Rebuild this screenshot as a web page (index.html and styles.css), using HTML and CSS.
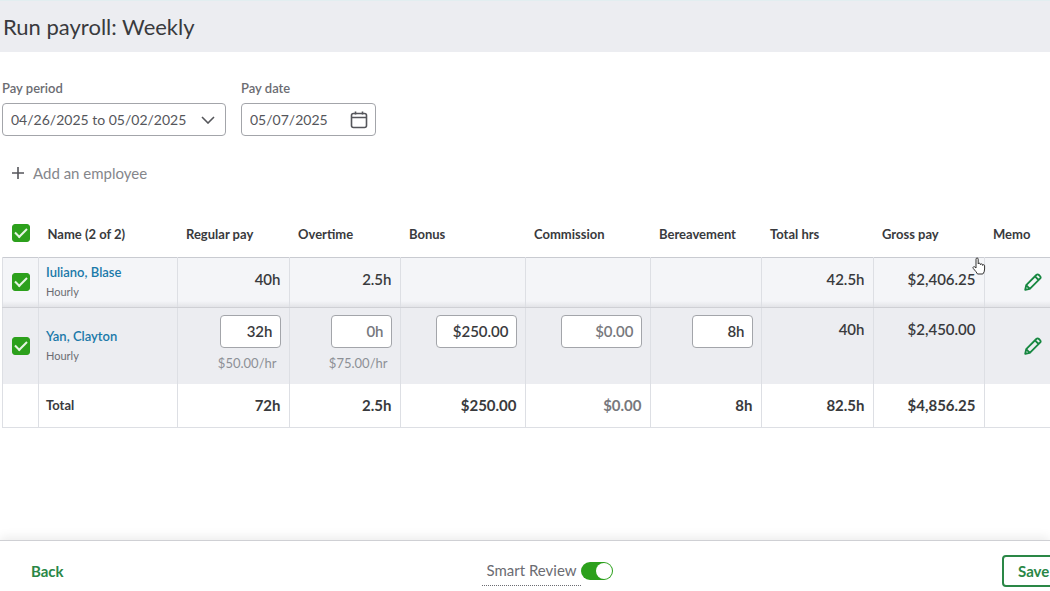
FILE: index.html
```html
<!DOCTYPE html>
<html lang="en">
<head>
    <meta charset="UTF-8">
    <title>Run payroll: Weekly</title>
    <link rel="stylesheet" href="styles.css">
</head>
<body>

    <header class="page-header">
        <h1>Run payroll: Weekly</h1>
    </header>

    <main class="content">
        <form class="filters">
            <div class="field">
                <label for="pay-period">Pay period</label>
                <div class="control period">
                    <select id="pay-period">
                        <option>04/26/2025 to 05/02/2025</option>
                    </select>
                    <svg class="chevron" viewBox="0 0 14 8" aria-hidden="true"><path d="M1 1l6 6 6-6"/></svg>
                </div>
            </div>
            <div class="field">
                <label for="pay-date">Pay date</label>
                <div class="control date">
                    <input type="text" id="pay-date" value="05/07/2025">
                    <button type="button" class="calendar" aria-label="Open calendar">
                        <svg viewBox="0 0 18 18"><rect x="1.500" y="2.500" width="15" height="14" rx="2"/><path d="M1.500 6.500h15M5.500 0.500v3M12.500 0.500v3"/></svg>
                    </button>
                </div>
            </div>
        </form>

        <button type="button" class="add-employee">
            <svg viewBox="0 0 12 12" aria-hidden="true"><path d="M6 0v12M0 6h12"/></svg>
            Add an employee
        </button>

        <table class="payroll">
            <colgroup>
                <col class="col-check">
                <col class="col-name">
                <col class="col-total">
                <col class="col-hours">
                <col class="col-money">
                <col class="col-money">
                <col class="col-hours">
                <col class="col-total">
                <col class="col-hours">
                <col class="col-memo">
            </colgroup>
            <thead>
                <tr>
                    <th class="check"><input type="checkbox" class="tick" aria-label="Select all" checked></th>
                    <th>Name (2 of 2)</th>
                    <th>Regular pay</th>
                    <th>Overtime</th>
                    <th>Bonus</th>
                    <th>Commission</th>
                    <th>Bereavement</th>
                    <th>Total hrs</th>
                    <th>Gross pay</th>
                    <th>Memo</th>
                </tr>
            </thead>
            <tbody>
                <tr class="row-plain">
                    <td class="check"><input type="checkbox" class="tick" aria-label="Select Iuliano, Blase" checked></td>
                    <td class="name"><a href="#">Iuliano, Blase</a><small>Hourly</small></td>
                    <td>40h</td>
                    <td>2.5h</td>
                    <td></td>
                    <td></td>
                    <td></td>
                    <td>42.5h</td>
                    <td>$2,406.25</td>
                    <td class="memo">
                        <button type="button" aria-label="Edit memo for Iuliano, Blase">
                            <svg viewBox="0 0 18 18"><path d="M1.200 16.800l1-4.600L12.300 2q1.300-1.300 2.600 0l1.100 1.100q1.300 1.300 0 2.600L5.800 15.800zM2.200 12.200l3.600 3.600M11 3.400l3.600 3.600"/></svg>
                        </button>
                    </td>
                </tr>
                <tr class="row-active">
                    <td class="check"><input type="checkbox" class="tick" aria-label="Select Yan, Clayton" checked></td>
                    <td class="name"><a href="#">Yan, Clayton</a><small>Hourly</small></td>
                    <td class="entry"><input type="text" class="amount" aria-label="Regular pay hours" value="32h"><small>$50.00/hr</small></td>
                    <td class="entry"><input type="text" class="amount empty" aria-label="Overtime hours" value="0h"><small>$75.00/hr</small></td>
                    <td class="entry"><input type="text" class="amount wide" aria-label="Bonus" value="$250.00"></td>
                    <td class="entry"><input type="text" class="amount wide empty" aria-label="Commission" value="$0.00"></td>
                    <td class="entry"><input type="text" class="amount" aria-label="Bereavement hours" value="8h"></td>
                    <td>40h</td>
                    <td>$2,450.00</td>
                    <td class="memo">
                        <button type="button" aria-label="Edit memo for Yan, Clayton">
                            <svg viewBox="0 0 18 18"><path d="M1.200 16.800l1-4.600L12.300 2q1.300-1.300 2.600 0l1.100 1.100q1.300 1.300 0 2.600L5.800 15.800zM2.200 12.200l3.600 3.600M11 3.400l3.600 3.600"/></svg>
                        </button>
                    </td>
                </tr>
            </tbody>
            <tfoot>
                <tr>
                    <td></td>
                    <th scope="row">Total</th>
                    <td>72h</td>
                    <td>2.5h</td>
                    <td>$250.00</td>
                    <td class="zero">$0.00</td>
                    <td>8h</td>
                    <td>82.5h</td>
                    <td>$4,856.25</td>
                    <td></td>
                </tr>
            </tfoot>
        </table>
    </main>

    <footer class="actions">
        <button type="button" class="back">Back</button>
        <div class="review">
            <label for="smart-review">Smart Review</label>
            <input type="checkbox" role="switch" id="smart-review" class="switch" checked>
        </div>
        <button type="button" class="save">Save</button>
    </footer>

    <svg class="pointer" viewBox="0 0 14 18" aria-hidden="true"><path d="M4 11V2.200q0-1.200 1.100-1.200t1.100 1.200V7q.2-.8 1.100-.8t1.100.9v.6q.2-.8 1.100-.8t1.100 1v.5q.2-.7 1-.7t1 1V12q0 3.200-1.800 5H5.500Q4.500 15 1.300 11.500q-.8-1.100.2-1.700T4 11z"/></svg>

</body>
</html>
```
FILE: styles.css
```css
* {
    margin: 0;
    padding: 0;
    box-sizing: border-box;
}

body {
    min-height: 100vh;
    display: flex;
    flex-direction: column;
    overflow-x: hidden;
    background-color: #fff;
    color: #393a3d;
    font-family: Lato, sans-serif;
    font-size: 15px;
    line-height: 20px;
}

button, input, select {
    font: inherit;
    color: inherit;
}

button {
    background: none;
    border: none;
    cursor: pointer;
}

svg {
    display: block;
    fill: none;
    stroke: currentColor;
}

.page-header {
    background-color: #ecedf1;
    border-top: 1px solid #e2eef0;
    padding: 10px 3px;
}

.page-header h1 {
    font-size: 22px;
    font-weight: normal;
    line-height: 31px;
}

.content {
    flex: 1;
    padding: 27px 0 0 2px;
}

.filters {
    display: flex;
    gap: 15px;
}

.field label {
    display: block;
    margin-bottom: 6px;
    color: #6b6c72;
    font-size: 13px;
    font-weight: 600;
    line-height: 18px;
}

.control {
    display: flex;
    align-items: center;
    height: 33px;
    border: 1px solid #a3a5aa;
    border-radius: 4px;
    color: #55565b;
    font-size: 14px;
}

.period {
    width: 224px;
    padding-right: 10px;
}

.date {
    width: 135px;
    padding-right: 7px;
}

.control select,
.control input {
    flex: 1;
    min-width: 0;
    height: 100%;
    padding-left: 8px;
    border: none;
    background: none;
    appearance: none;
}

.chevron {
    width: 14px;
    height: 8px;
    stroke-width: 1.6;
}

.calendar svg {
    width: 18px;
    height: 18px;
    stroke-width: 1.6;
}

.add-employee {
    display: flex;
    align-items: center;
    gap: 9px;
    margin: 27px 0 26px 10px;
    color: #85868b;
}

.add-employee svg {
    width: 12px;
    height: 12px;
    color: #55565b;
    stroke-width: 1.6;
}

/* payroll grid */

.payroll {
    width: 100%;
    min-width: 1048px;
    table-layout: fixed;
    border-collapse: collapse;
}

.col-check { width: 36px; }
.col-hours { width: 111px; }
.col-total { width: 112px; }
.col-money { width: 125px; }
.col-memo { width: 66px; }

.payroll th {
    padding: 0 9px;
    font-size: 13px;
    font-weight: bold;
    text-align: left;
}

.payroll thead th {
    height: 48px;
    padding-top: 2px;
}

.payroll td {
    padding: 11px 8px 0;
    border: 1px solid #dddfe4;
    font-weight: 600;
    text-align: right;
    vertical-align: top;
}

.payroll td:last-child {
    border-right: none;
}

.payroll tbody tr:first-child td {
    border-top-color: #c9cbd1;
}

.payroll .check {
    padding: 0;
    vertical-align: middle;
}

.payroll .name {
    padding: 0 7px;
    font-weight: normal;
    text-align: left;
    vertical-align: middle;
}

.name a,
.name small {
    display: block;
}

.name a {
    color: #1a79a9;
    font-size: 13px;
    font-weight: 600;
    text-decoration: none;
}

.name small {
    color: #6b6c72;
    font-size: 11px;
}

.row-plain {
    height: 50px;
    background: linear-gradient(#f4f5f8 88%, #e3e4e8);
}

.row-plain td {
    border-bottom-color: #cfd0d5;
}

.row-active {
    height: 77px;
    background-color: #ecedf1;
}

.row-active td {
    border-bottom: none;
}

.payroll .entry {
    padding-top: 7px;
}

.amount {
    display: block;
    width: 61px;
    height: 33px;
    margin-left: auto;
    padding-right: 7px;
    border: 1px solid #a3a5aa;
    border-radius: 4px;
    background-color: #fff;
    font-weight: 600;
    text-align: right;
}

.amount.wide {
    width: 81px;
}

.amount.empty,
.payroll .zero {
    color: #77787d;
}

.entry small {
    display: block;
    margin-top: 5px;
    padding-right: 4px;
    color: #8d9096;
    font-size: 13px;
    font-weight: normal;
}

.payroll .memo {
    padding: 0 8px;
    vertical-align: middle;
}

.memo button {
    display: block;
    margin-left: auto;
    color: #168740;
}

.memo svg {
    width: 18px;
    height: 18px;
    stroke-width: 1.8;
    stroke-linejoin: round;
}

.payroll tfoot tr {
    height: 43px;
}

.payroll tfoot th {
    padding: 0 7px;
    border-bottom: 1px solid #dddfe4;
}

.payroll tfoot td {
    border-top: none;
    font-weight: bold;
}

.tick {
    display: grid;
    place-content: center;
    width: 18px;
    height: 18px;
    margin: 0 auto;
    border: 1px solid #a3a5aa;
    border-radius: 3px;
    appearance: none;
}

.tick:checked {
    border-color: #2ca01c;
    background-color: #2ca01c;
}

.tick:checked::before {
    content: "";
    width: 10px;
    height: 5px;
    margin-bottom: 3px;
    border: solid #e6f5e3;
    border-width: 0 0 2px 2px;
    transform: rotate(-45deg);
}

/* bottom bar */

.actions {
    display: grid;
    grid-template-columns: 1fr auto 1fr;
    align-items: center;
    padding: 14px 0 4px 31px;
    overflow-x: clip;
    border-top: 1px solid #cfd0d4;
    background-color: #fff;
    box-shadow: 0 -3px 10px rgba(0, 0, 0, 0.08);
}

.back,
.save {
    color: #2a8746;
    font-weight: bold;
}

.back {
    justify-self: start;
}

.review {
    display: flex;
    align-items: center;
    margin-left: 14px;
}

.review label {
    padding: 4px 4px 5px;
    border-bottom: 1px dotted #6b6c72;
    color: #6b6c72;
}

.switch {
    width: 32px;
    height: 18px;
    padding: 1px;
    border-radius: 9px;
    background-color: #8d9096;
    appearance: none;
}

.switch::before {
    content: "";
    display: block;
    width: 16px;
    height: 16px;
    border-radius: 50%;
    background-color: #fff;
}

.switch:checked {
    background-color: #2ca01c;
}

.switch:checked::before {
    margin-left: auto;
}

/* runs off the right edge of the bar */
.save {
    justify-self: end;
    width: 96px;
    height: 32px;
    margin-right: -48px;
    padding-left: 14px;
    border: 2px solid #2a8746;
    border-radius: 4px;
    text-align: left;
}

.pointer {
    position: absolute;
    top: 257px;
    left: 972px;
    width: 14px;
    height: 18px;
    fill: #fff;
    stroke: #333;
    pointer-events: none;
}
```
